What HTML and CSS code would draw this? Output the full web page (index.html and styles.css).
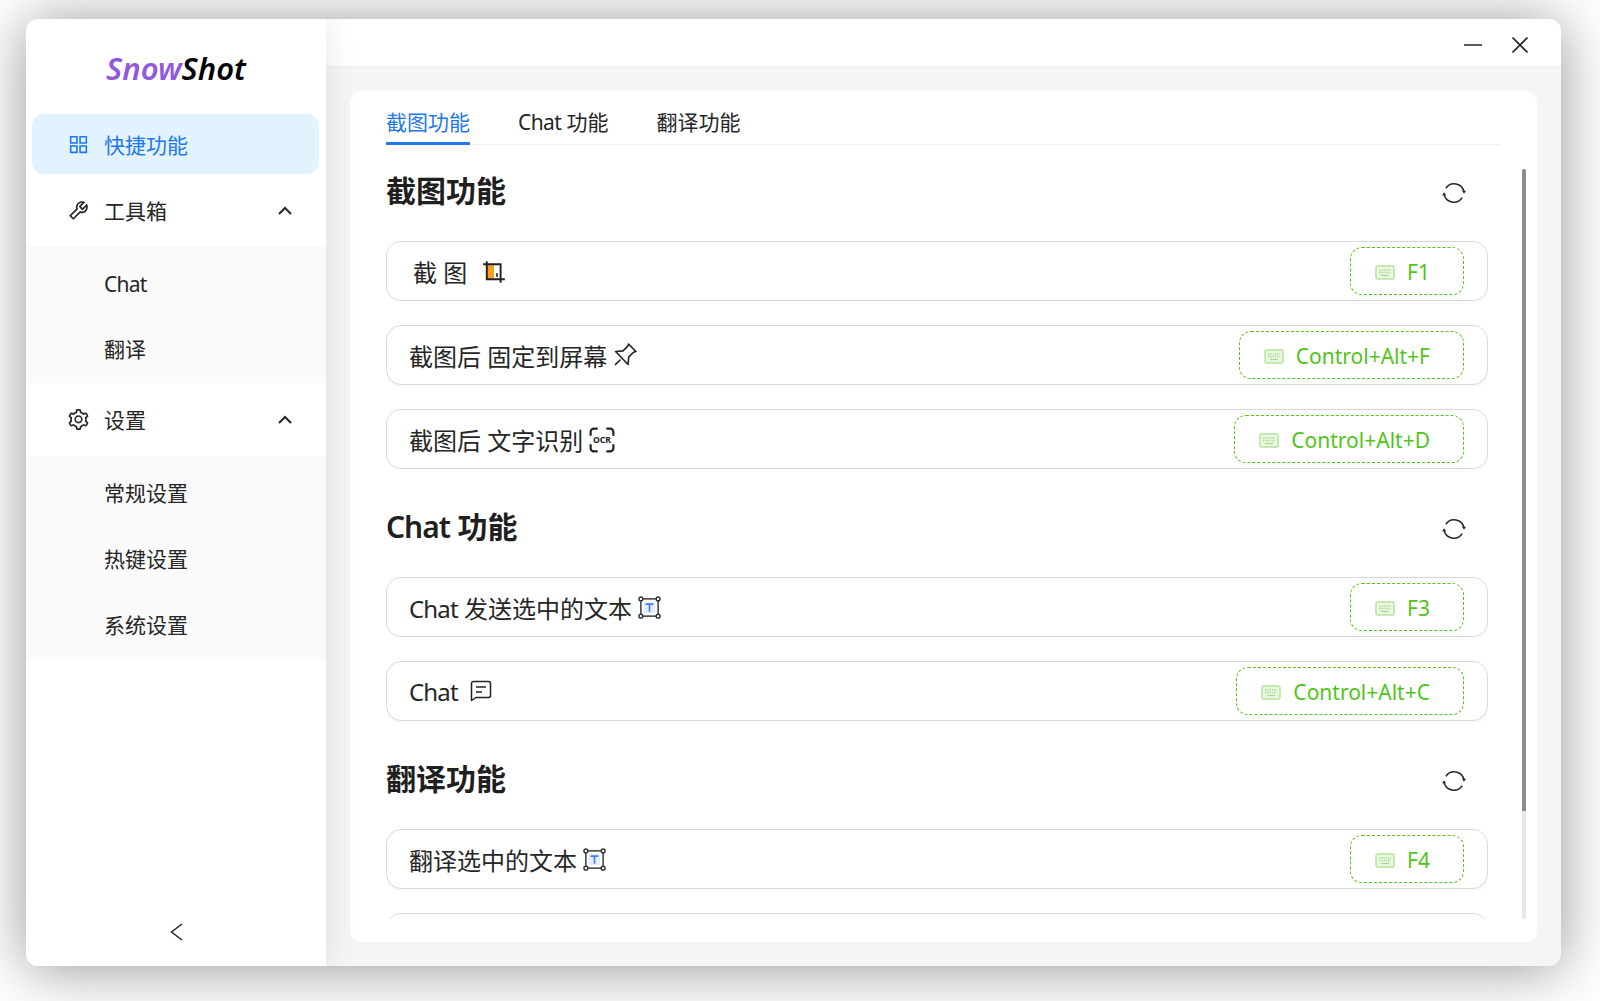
FILE: index.html
```html
<!DOCTYPE html>
<html lang="zh-CN">
<head>
<meta charset="utf-8">
<title>SnowShot</title>
<link rel="stylesheet" href="styles.css">
</head>
<body>
<svg class="defs" width="0" height="0" aria-hidden="true">
  <symbol id="kbd" viewBox="0 0 20 15">
    <rect x="1" y="1" width="18" height="13" rx="1.5" fill="#eaf7e2" stroke="#b4e39b" stroke-width="1.4"/>
    <path d="M4 5h12M4 7.5h12" stroke="#a5dc88" stroke-width="1.3" stroke-dasharray="1.3 1"/>
    <path d="M6 10.5h8" stroke="#a5dc88" stroke-width="1.3"/>
  </symbol>
  <symbol id="reload" viewBox="0 0 24 24">
    <path d="M3.800 7.400A10 10 0 0 1 22 11M20.200 16.600A10 10 0 0 1 2 13" fill="none" stroke="#262626" stroke-width="1.500"/>
    <path d="M20 9.800h4l-2 3zM0 14.200h4L2 11.200z" fill="#262626"/>
  </symbol>
  <symbol id="textbox" viewBox="0 0 24 24">
    <rect x="3" y="3" width="18" height="18" fill="none" stroke="#333" stroke-width="1.5"/>
    <g fill="#fff" stroke="#333" stroke-width="1.5">
      <circle cx="3" cy="3" r="2"/><circle cx="21" cy="3" r="2"/><circle cx="3" cy="21" r="2"/><circle cx="21" cy="21" r="2"/>
    </g>
    <rect x="6" y="6" width="12" height="12" fill="#e3edff"/>
    <path d="M8 8.5h8M12 8.5v8" fill="none" stroke="#3f7df0" stroke-width="1.7"/>
  </symbol>
</svg>
<div class="window">
  <aside class="sidebar">
    <div class="logo"><span class="logo-snow">Snow</span><span class="logo-shot">Shot</span></div>
    <nav class="menu">
      <div class="item item-active">
        <svg class="item-icon" viewBox="64 64 896 896"><path fill="currentColor" d="M464 144H160c-8.8 0-16 7.2-16 16v304c0 8.8 7.2 16 16 16h304c8.8 0 16-7.2 16-16V160c0-8.8-7.2-16-16-16zm-52 268H212V212h200v200zm452-268H560c-8.8 0-16 7.2-16 16v304c0 8.8 7.2 16 16 16h304c8.8 0 16-7.2 16-16V160c0-8.8-7.2-16-16-16zm-52 268H612V212h200v200zM464 544H160c-8.8 0-16 7.2-16 16v304c0 8.8 7.2 16 16 16h304c8.8 0 16-7.2 16-16V560c0-8.8-7.2-16-16-16zm-52 268H212V612h200v200zm452-268H560c-8.8 0-16 7.2-16 16v304c0 8.8 7.2 16 16 16h304c8.8 0 16-7.2 16-16V560c0-8.8-7.2-16-16-16zm-52 268H612V612h200v200z"/></svg>
        <span>快捷功能</span>
      </div>
      <div class="item item-group">
        <svg class="item-icon" viewBox="64 64 896 896"><path fill="currentColor" d="M876.6 239.5c-.5-.9-1.2-1.8-2-2.5-5-5-13.1-5-18.1 0L684.2 409.3l-67.9-67.9L788.7 169c.8-.8 1.4-1.6 2-2.5 3.6-6.1 1.6-13.9-4.5-17.5-98.2-58-226.8-44.7-311.3 39.7-67 67-89.2 162-66.5 247.4l-293 293c-3 3-2.8 7.9.3 11l169.7 169.7c3.1 3.1 8.1 3.3 11 .3l292.9-292.9c85.5 22.8 180.5.7 247.6-66.4 84.4-84.5 97.7-213.1 39.7-311.3zM786 499.8c-58.1 58.1-145.3 69.3-214.6 33.6l-8.8 8.8-.1-.1-274 274.1-79.2-79.2 230.1-230.1s0 .1.1.1l52.8-52.8c-35.7-69.3-24.5-156.5 33.6-214.6a184.2 184.2 0 0 1 144-53.5L537 318.9a32.05 32.05 0 0 0 0 45.3l124.5 124.5a32.05 32.05 0 0 0 45.3 0l132.8-132.8c3.7 51.8-14.4 104.8-53.6 143.9z"/></svg>
        <span>工具箱</span>
        <svg class="chev" viewBox="0 0 14 9"><path d="M1 8l6-6 6 6" fill="none" stroke="#262626" stroke-width="2"/></svg>
      </div>
      <div class="sub sub-tools">
        <div class="sub-item sub-item-latin"><span class="latin">Chat</span></div>
        <div class="sub-item">翻译</div>
      </div>
      <div class="item item-settings">
        <svg class="item-icon" viewBox="64 64 896 896"><path fill="currentColor" d="M924.8 625.7l-65.5-56c3.1-19 4.7-38.4 4.7-57.8s-1.6-38.8-4.7-57.8l65.5-56a32.03 32.03 0 0 0 9.3-35.2l-.9-2.6a443.74 443.74 0 0 0-79.7-137.9l-1.8-2.1a32.12 32.12 0 0 0-35.1-9.5l-81.3 28.9c-30-24.6-63.5-44-99.7-57.6l-15.7-85a32.05 32.05 0 0 0-25.8-25.7l-2.7-.5c-52.1-9.4-106.9-9.4-159 0l-2.7.5a32.05 32.05 0 0 0-25.8 25.7l-15.8 85.4a351.86 351.86 0 0 0-99 57.4l-81.9-29.1a32 32 0 0 0-35.1 9.5l-1.8 2.1a446.02 446.02 0 0 0-79.7 137.9l-.9 2.6c-4.5 12.5-.8 26.5 9.3 35.2l66.3 56.6c-3.1 18.8-4.6 38-4.6 57.1 0 19.2 1.5 38.4 4.6 57.1L99 625.5a32.03 32.03 0 0 0-9.3 35.2l.9 2.6c18.1 50.4 44.9 96.9 79.7 137.9l1.8 2.1a32.12 32.12 0 0 0 35.1 9.5l81.9-29.1c29.8 24.5 63.1 43.9 99 57.4l15.8 85.4a32.05 32.05 0 0 0 25.8 25.7l2.7.5a449.4 449.4 0 0 0 159 0l2.7-.5a32.05 32.05 0 0 0 25.8-25.7l15.7-85a350 350 0 0 0 99.7-57.6l81.3 28.9a32 32 0 0 0 35.1-9.5l1.8-2.1c34.8-41.1 61.6-87.5 79.7-137.9l.9-2.6c4.5-12.3.8-26.3-9.3-35zM788.3 465.9c2.5 15.1 3.8 30.6 3.8 46.1s-1.3 31-3.8 46.1l-6.6 40.1 74.7 63.9a370.03 370.03 0 0 1-42.6 73.6L721 702.8l-31.4 25.8c-23.9 19.6-50.5 35-79.3 45.8l-38.1 14.3-17.9 97a377.5 377.5 0 0 1-85 0l-17.9-97.2-37.8-14.5c-28.5-10.8-55-26.2-78.7-45.7l-31.4-25.9-93.4 33.2c-17-22.9-31.2-47.6-42.6-73.6l75.5-64.5-6.5-40c-2.4-14.9-3.7-30.3-3.7-45.5 0-15.3 1.2-30.6 3.7-45.5l6.5-40-75.5-64.5c11.3-26.1 25.6-50.7 42.6-73.6l93.4 33.2 31.4-25.9c23.7-19.5 50.2-34.9 78.7-45.7l37.9-14.3 17.9-97.2c28.1-3.2 56.8-3.2 85 0l17.9 97 38.1 14.3c28.7 10.8 55.4 26.2 79.3 45.8l31.4 25.8 92.8-32.9c17 22.9 31.2 47.6 42.6 73.6L781.8 426l6.5 39.9zM512 326c-97.2 0-176 78.8-176 176s78.8 176 176 176 176-78.8 176-176-78.8-176-176-176zm79.2 255.2A111.6 111.6 0 0 1 512 614c-29.9 0-58-11.7-79.2-32.8A111.6 111.6 0 0 1 400 502c0-29.9 11.7-58 32.8-79.2C454 401.6 482.1 390 512 390c29.9 0 58 11.6 79.2 32.8A111.6 111.6 0 0 1 624 502c0 29.9-11.7 58-32.8 79.2z"/></svg>
        <span>设置</span>
        <svg class="chev" viewBox="0 0 14 9"><path d="M1 8l6-6 6 6" fill="none" stroke="#262626" stroke-width="2"/></svg>
      </div>
      <div class="sub sub-settings">
        <div class="sub-item">常规设置</div>
        <div class="sub-item">热键设置</div>
        <div class="sub-item">系统设置</div>
      </div>
    </nav>
    <div class="collapse">
      <svg class="collapse-icon" viewBox="0 0 13 18"><path d="M12 1L1.5 9 12 17" fill="none" stroke="#262626" stroke-width="1.5"/></svg>
    </div>
  </aside>
  <main class="main">
    <header class="titlebar">
      <svg class="win-min" viewBox="0 0 18 2"><path d="M0 1h18" stroke="#262626" stroke-width="1.6"/></svg>
      <svg class="win-close" viewBox="0 0 16 16"><path d="M.5.5l15 15M15.500.5l-15 15" stroke="#262626" stroke-width="1.6"/></svg>
    </header>
    <div class="content">
      <section class="card">
        <div class="tabs">
          <div class="tab tab-active">截图功能</div>
          <div class="tab"><span class="latin-tight">Chat</span> 功能</div>
          <div class="tab">翻译功能</div>
        </div>
        <div class="scroll">
          <div class="sections">
            <div class="section">
              <div class="head"><h2>截图功能</h2><svg class="reload"><use href="#reload"/></svg></div>
              <div class="row">
                <div class="label label-spaced"><span>截 图</span>
                  <svg class="ic ic-crop" viewBox="0 0 20 20"><rect x="4" y="3.500" width="6" height="12" fill="#f7a11f"/><path d="M4 1v15h15M1 3.500h14.500V19" fill="none" stroke="#222" stroke-width="1.6"/><path d="M12.500 11v3" stroke="#222" stroke-width="1.400"/></svg>
                </div>
                <div class="tag"><svg class="kbd"><use href="#kbd"/></svg><span>F1</span></div>
              </div>
              <div class="row">
                <div class="label"><span>截图后 固定到屏幕</span>
                  <svg class="ic ic-pin" viewBox="0 0 24 24"><path d="M15.500 1l7.500 7.500-2.500.8-4.800 4.800-.6 7.400L2.600 8.500l7.400-.6 4.800-4.800zM7.500 16.500L2 22" fill="none" stroke="#222" stroke-width="1.600" stroke-linejoin="round"/></svg>
                </div>
                <div class="tag"><svg class="kbd"><use href="#kbd"/></svg><span>Control+Alt+F</span></div>
              </div>
              <div class="row">
                <div class="label"><span>截图后 文字识别</span>
                  <svg class="ic ic-ocr" viewBox="0 0 24 24"><path d="M8 1.500H4.500a3 3 0 0 0-3 3V8M16 1.500h3.500a3 3 0 0 1 3 3V8M8 22.500H4.500a3 3 0 0 1-3-3V16M16 22.500h3.500a3 3 0 0 0 3-3V16" fill="none" stroke="#222" stroke-width="2"/><text x="12" y="15" class="ocr-text" text-anchor="middle">OCR</text></svg>
                </div>
                <div class="tag"><svg class="kbd"><use href="#kbd"/></svg><span>Control+Alt+D</span></div>
              </div>
            </div>
            <div class="section">
              <div class="head"><h2><span class="latin">Chat</span> 功能</h2><svg class="reload"><use href="#reload"/></svg></div>
              <div class="row">
                <div class="label"><span><span class="latin">Chat</span> 发送选中的文本</span>
                  <svg class="ic ic-box"><use href="#textbox"/></svg>
                </div>
                <div class="tag"><svg class="kbd"><use href="#kbd"/></svg><span>F3</span></div>
              </div>
              <div class="row">
                <div class="label"><span class="latin">Chat</span>
                  <svg class="ic ic-chat" viewBox="0 0 22 22"><path d="M1.500 3.500a2 2 0 0 1 2-2h15a2 2 0 0 1 2 2v12a2 2 0 0 1-2 2H6l-4.500 3z" fill="none" stroke="#222" stroke-width="1.500" stroke-linejoin="round"/><path d="M6 7h10M6 12h6" stroke="#222" stroke-width="1.500"/></svg>
                </div>
                <div class="tag"><svg class="kbd"><use href="#kbd"/></svg><span>Control+Alt+C</span></div>
              </div>
            </div>
            <div class="section">
              <div class="head"><h2>翻译功能</h2><svg class="reload"><use href="#reload"/></svg></div>
              <div class="row">
                <div class="label"><span>翻译选中的文本</span>
                  <svg class="ic ic-box"><use href="#textbox"/></svg>
                </div>
                <div class="tag"><svg class="kbd"><use href="#kbd"/></svg><span>F4</span></div>
              </div>
              <div class="row"></div>
            </div>
          </div>
          <div class="scrollbar"><div class="thumb"></div></div>
        </div>
      </section>
    </div>
  </main>
</div>
</body>
</html>
```
FILE: styles.css
```css
* { box-sizing: border-box; }
html, body { margin: 0; height: 1001px; overflow: hidden; }
body {
  background: #fff;
  padding: 19px 39px 35px 26px;
  font-family: "Noto Sans", "Noto Sans CJK SC", sans-serif;
  font-size: 21px;
  color: #262626;
}
.defs { position: absolute; }
.latin { letter-spacing: -.035em; }
.latin-tight { letter-spacing: -.03em; }
.window {
  display: flex;
  height: 947px;
  border-radius: 12px;
  background: #f5f5f5;
  box-shadow: 0 3px 60px rgba(0, 0, 0, .42);
  overflow: hidden;
}
.sidebar {
  position: relative;
  z-index: 2;
  flex: 0 0 300px;
  display: flex;
  flex-direction: column;
  background: #fff;
  box-shadow: 0 0 30px rgba(0, 0, 0, .1);
}
.logo {
  height: 95px;
  padding-top: 28px;
  text-align: center;
  font-size: 31px;
  line-height: 42px;
  font-style: italic;
  font-weight: 600;
}
.logo-snow { color: #9258db; }
.logo-shot { color: #000; }
.menu { flex: 1; }
.item {
  display: flex;
  align-items: center;
  height: 60px;
  margin: 0 7px 0 6px;
  padding-left: 36px;
  border-radius: 12px;
}
.item-group { margin-top: 6px; }
.item-settings { margin-top: 6px; }
.item-active { background: #e3f2ff; color: #1f78ec; }
.item-icon { flex: none; width: 21px; height: 21px; margin-right: 15px; }
.chev { width: 14px; height: 9px; margin-left: auto; margin-right: 27px; }
.sub { background: #fafafa; }
.sub-tools { margin-top: 6px; padding: 6px 0 5px; }
.sub-settings { margin-top: 7px; padding: 6px 0 5px; }
.sub-item {
  display: flex;
  align-items: center;
  height: 60px;
  padding-left: 78px;
  margin-bottom: 6px;
}
.sub-item-latin { padding-top: 3px; }
.sub-item:last-child { margin-bottom: 0; }
.collapse {
  display: flex;
  justify-content: center;
  padding-bottom: 25px;
}
.collapse-icon { width: 13px; height: 18px; }
.main { flex: 1; display: flex; flex-direction: column; min-width: 0; }
.titlebar {
  flex: 0 0 47px;
  display: flex;
  align-items: center;
  justify-content: flex-end;
  gap: 30px;
  padding-right: 33px;
  padding-top: 4px;
  background: #fff;
  box-shadow: 0 1px 2px rgba(0, 0, 0, .03);
}
.win-min { width: 18px; height: 2px; }
.win-close { width: 16px; height: 16px; }
.content { flex: 1; padding: 25px 24px 24px; min-height: 0; }
.card {
  height: 100%;
  padding: 0 36px;
  background: #fff;
  border-radius: 12px;
}
.tabs {
  display: flex;
  gap: 48px;
  height: 54px;
  border-bottom: 1.5px solid #f0f0f0;
  margin-bottom: 24px;
}
.tab {
  height: 54px;
  padding-top: 17px;
  line-height: 28px;
}
.tab-active { color: #1f78ec; border-bottom: 3px solid #1f78ec; }
.scroll { display: flex; height: 750px; margin-right: -25px; }
.sections { flex: 1; min-width: 0; padding-right: 34px; overflow: hidden; }
.section { padding-bottom: 12px; }
.head {
  display: flex;
  align-items: center;
  justify-content: space-between;
  height: 44px;
  margin-bottom: 28px;
  padding-right: 22px;
}
.head h2 { margin: 0; font-size: 30px; line-height: 44px; font-weight: 600; color: #1f1f1f; }
.reload { width: 24px; height: 24px; margin-top: 4px; }
.row {
  display: flex;
  align-items: center;
  justify-content: space-between;
  height: 60px;
  margin-bottom: 24px;
  padding: 0 23px;
  background: #fff;
  border: 1.5px solid #d9d9d9;
  border-radius: 15px;
  box-shadow: 0 3px 0 rgba(0, 0, 0, .02);
}
.label {
  display: flex;
  align-items: center;
  gap: 6px;
  font-size: 24px;
  padding-top: 1px;
  margin-left: -1px;
}
.label-spaced { margin-left: 3px; gap: 15px; }
.ic { flex: none; display: block; }
.ic-crop { width: 24px; height: 24px; margin-top: 0; }
.ic-pin { width: 24px; height: 24px; margin-top: -2px; }
.ic-ocr { width: 26px; height: 26px; margin-top: 0; }
.ocr-text { font-family: "Noto Sans", sans-serif; font-size: 8px; font-weight: 700; fill: #222; }
.ic-box { width: 23px; height: 23px; margin-top: 0; }
.ic-chat { width: 22px; height: 22px; margin-left: 6px; margin-top: -2px; }
.tag {
  display: flex;
  align-items: center;
  gap: 12px;
  min-width: 114px;
  height: 48px;
  padding: 2px 33px 0 24px;
  border: 1.5px dashed #52c41a;
  border-radius: 12px;
  color: #52c41a;
  font-size: 21px;
  box-shadow: 0 3px 0 rgba(82, 196, 26, .04);
}
.kbd { flex: none; width: 20px; height: 15px; }
.scrollbar { flex: 0 0 4px; background: #e8e8e8; border-radius: 0 0 2px 2px; }
.thumb { height: 642px; background: #8c8c8c; border-radius: 2px 2px 0 0; }
```
